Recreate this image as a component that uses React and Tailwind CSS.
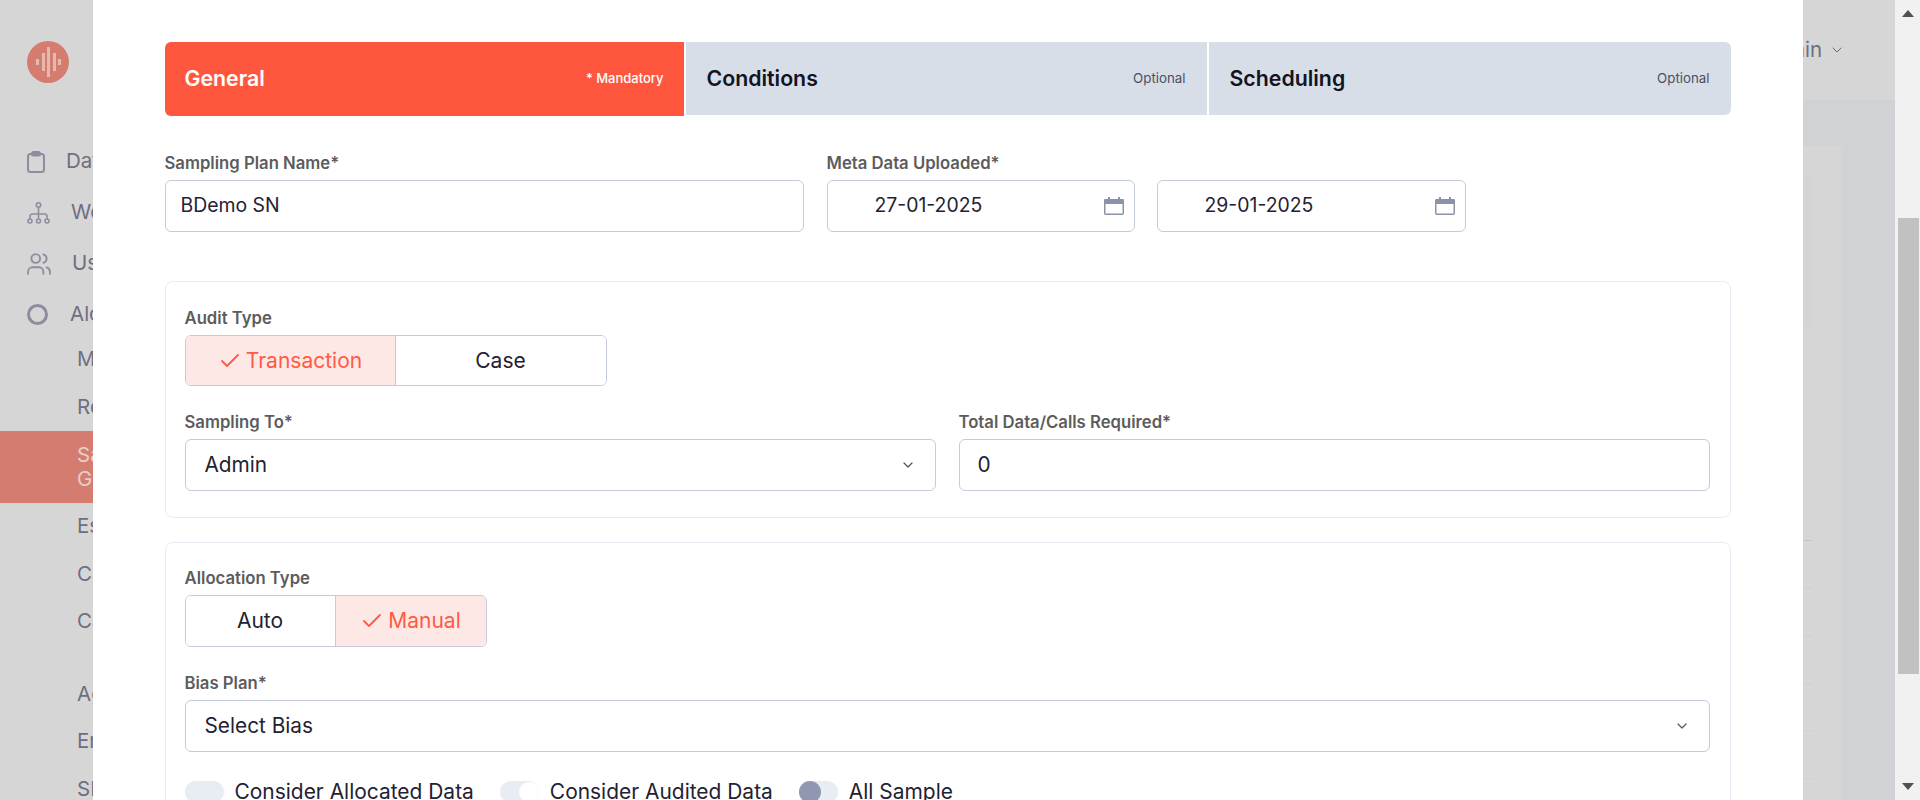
import { Check, ChevronDown } from "lucide-react";

const subItemsTop = ["Manual", "Review"];
const subItemsMiddle = ["Escalation", "Calibration", "Campaign"];
const subItemsBottom = ["Agents", "Errors", "SLA"];

function Logo() {
  return (
    <svg width="42" height="42" viewBox="0 0 42 42">
      <circle cx="21" cy="21" r="21" fill="#d57c71" />
      <g fill="#e5b8b0">
        <rect x="9" y="18" width="3" height="6" />
        <rect x="15" y="12" width="3" height="18" />
        <rect x="20" y="6" width="3" height="30" />
        <rect x="26" y="12" width="3" height="18" />
        <rect x="31" y="18" width="3" height="6" />
      </g>
    </svg>
  );
}

function ClipboardIcon() {
  return (
    <svg width="18" height="22" viewBox="0 0 18 22" fill="none" stroke="#8e8d9f" strokeWidth="2">
      <rect x="1" y="3" width="16" height="18" rx="2.5" />
      <rect x="5" y="1" width="8" height="3.5" rx="1.5" />
    </svg>
  );
}

function HierarchyIcon() {
  return (
    <svg width="23" height="22" viewBox="0 0 23 22" fill="none" stroke="#8e8d9f" strokeWidth="1.6">
      <circle cx="11.5" cy="3" r="2.2" />
      <path d="M11.5 5.2V17M3 17v-2.5a2.5 2.5 0 0 1 2.5-2.5h12a2.5 2.5 0 0 1 2.5 2.5V17" />
      <circle cx="3" cy="19" r="2" />
      <circle cx="11.5" cy="19" r="2" />
      <circle cx="20" cy="19" r="2" />
    </svg>
  );
}

function UsersIcon() {
  return (
    <svg width="24" height="22" viewBox="1 2 22 20" fill="none" stroke="#8e8d9f" strokeWidth="1.7" strokeLinecap="round">
      <path d="M16 21v-2a4 4 0 0 0-4-4H6a4 4 0 0 0-4 4v2" />
      <circle cx="9" cy="7" r="4" />
      <path d="M22 21v-2a4 4 0 0 0-3-3.87" />
      <path d="M16 3.13a4 4 0 0 1 0 7.75" />
    </svg>
  );
}

function CalendarIcon() {
  return (
    <svg width="20" height="18" viewBox="0 0 20 18" fill="none">
      <rect x="0.75" y="2.75" width="18.5" height="14.5" rx="1" stroke="#8b93a8" strokeWidth="1.5" />
      <rect x="0.5" y="2" width="19" height="5" fill="#8b93a8" />
      <rect x="4" y="0" width="2" height="3" fill="#8b93a8" />
      <rect x="14" y="0" width="2" height="3" fill="#8b93a8" />
    </svg>
  );
}

function Sidebar() {
  return (
    <div className="w-[270px] shrink-0 bg-[#d6d6d6] text-[20.5px] text-[#6e6e80]">
      <div className="h-[136px] pl-[27px] pt-[41px]">
        <Logo />
      </div>
      <div className="flex h-[51px] items-center gap-[21px] pl-[27px]">
        <ClipboardIcon />
        <span>Data</span>
      </div>
      <div className="flex h-[51px] items-center gap-[21px] pl-[27px]">
        <HierarchyIcon />
        <span>Workflow</span>
      </div>
      <div className="flex h-[51px] items-center gap-[21px] pl-[27px]">
        <UsersIcon />
        <span>Users</span>
      </div>
      <div className="flex h-[47px] items-center gap-[22px] pl-[27px] pt-[4px]">
        <div className="h-[21px] w-[21px] rounded-full border-[3px] border-[#8e8d9f]" />
        <span>Alocation</span>
      </div>
      {subItemsTop.map((item) => (
        <div key={item} className="flex h-[47.5px] items-center pl-[77px]">
          {item}
        </div>
      ))}
      <div className="flex h-[72px] items-center bg-[#d57c71] pl-[77px] leading-6 text-[#e9cdc8]">
        Sampling
        <br />
        Generation
      </div>
      {subItemsMiddle.map((item) => (
        <div key={item} className="flex h-[47.5px] items-center pl-[77px]">
          {item}
        </div>
      ))}
      <div className="h-[25px]" />
      {subItemsBottom.map((item) => (
        <div key={item} className="flex h-[47.5px] items-center pl-[77px]">
          {item}
        </div>
      ))}
    </div>
  );
}

function Background() {
  return (
    <div className="flex min-w-0 flex-1 flex-col bg-[#d1d2d6]">
      <div className="flex h-[100px] shrink-0 items-center justify-end gap-[7px] bg-[#d6d6d6] pr-[50px] text-[20.5px] text-[#6e6e80]">
        <span>Admin</span>
        <ChevronDown size={16} strokeWidth={1.5} className="text-[#6b6b6b]" />
      </div>
      <div className="mr-[53px] mt-[46px] flex-1 rounded-t-md bg-[#d6d6d6] pr-[30px] pt-[30px]">
        <div className="h-[151px] rounded-md bg-[#d3d4d8]" />
        <div className="mt-[166px]">
          <div className="h-[48px] border-b border-[#c4c4c4]" />
          {[1, 2, 3, 4, 5].map((row) => (
            <div key={row} className="h-[47.5px] border-b border-[#cfcfcf]" />
          ))}
        </div>
      </div>
    </div>
  );
}

function Label({ children }) {
  return <div className="mb-[7px] h-5 text-[16.7px] leading-5 font-semibold text-[#5c5c5c]">{children}</div>;
}

function Field({ children, className }) {
  return (
    <div className={`flex h-[52px] items-center rounded-md border border-[#c3cbdc] bg-white text-[#1f2233] ${className}`}>
      {children}
    </div>
  );
}

function Segment({ active, children, className }) {
  return (
    <div
      className={`flex items-center justify-center gap-[4px] text-[21px] ${
        active ? "bg-[#fee8e6] text-[#ff5a45]" : "bg-white text-[#1f2233]"
      } ${className}`}
    >
      {active && <Check size={24} strokeWidth={1.8} />}
      {children}
    </div>
  );
}

function Toggle({ knob }) {
  return (
    <div className="flex h-[22px] w-[39px] shrink-0 items-center rounded-full bg-[#e8ecf3]">
      {knob === "white" && <div className="ml-auto h-[20px] w-[20px] rounded-full bg-white" />}
      {knob === "dark" && <div className="h-[22px] w-[22px] rounded-full bg-[#8f98b0]" />}
    </div>
  );
}

function Tab({ title, note, active }) {
  return (
    <div
      className={`flex items-center justify-between ${
        active
          ? "h-[74px] rounded-l-md bg-[#ff563e] pl-[20px] pr-[20px] text-white"
          : "h-[73px] bg-[#d8dee8] pl-[21px] pr-[21px] text-[#12141f] last:rounded-r-md"
      }`}
    >
      <span className="text-[21.3px] font-semibold">{title}</span>
      <span className={active ? "text-[13px] font-medium" : "text-[13.3px] text-[#4b5060]"}>{note}</span>
    </div>
  );
}

function Modal() {
  return (
    <div className="absolute inset-y-0 left-0 right-[25px] flex justify-center">
      <div className="h-full w-[1710px] shrink-0 overflow-hidden bg-white pl-[72px] pt-[42px]">
        <div className="w-[1566px]">
          <div className="grid grid-cols-[519px_521px_1fr] items-start gap-[2px]">
            <Tab title="General" note="* Mandatory" active />
            <Tab title="Conditions" note="Optional" />
            <Tab title="Scheduling" note="Optional" />
          </div>

          <div className="mt-[37px] flex gap-[23px] text-[19.4px]">
            <div className="w-[639px]">
              <Label>Sampling Plan Name*</Label>
              <Field className="pl-[15px]">BDemo SN</Field>
            </div>
            <div>
              <Label>Meta Data Uploaded*</Label>
              <div className="flex gap-[22px]">
                <Field className="w-[308px] justify-between pl-[47px] pr-[10px]">
                  27-01-2025
                  <CalendarIcon />
                </Field>
                <Field className="w-[309px] justify-between pl-[47px] pr-[10px]">
                  29-01-2025
                  <CalendarIcon />
                </Field>
              </div>
            </div>
          </div>

          <div className="mt-[49px] rounded-lg border border-[#e8ebf3] pb-[26px] pl-[19px] pr-[20px] pt-[26px] text-[20.8px]">
            <Label>Audit Type</Label>
            <div className="flex h-[51px] w-[422px] overflow-hidden rounded-md border border-[#c3cbdc]">
              <Segment active className="w-[210px] border-r border-[#c3cbdc]">
                Transaction
              </Segment>
              <Segment className="flex-1">Case</Segment>
            </div>
            <div className="mt-[26px] grid grid-cols-2 gap-[23px]">
              <div>
                <Label>Sampling To*</Label>
                <Field className="justify-between pl-[19px] pr-[19px]">
                  Admin
                  <ChevronDown size={16} strokeWidth={1.8} className="text-[#555]" />
                </Field>
              </div>
              <div>
                <Label>Total Data/Calls Required*</Label>
                <Field className="pl-[18px]">0</Field>
              </div>
            </div>
          </div>

          <div className="mt-[24px] rounded-lg border border-[#e8ebf3] pb-[26px] pl-[19px] pr-[20px] pt-[25px] text-[20.8px]">
            <Label>Allocation Type</Label>
            <div className="flex h-[52px] w-[302px] overflow-hidden rounded-md border border-[#c3cbdc]">
              <Segment className="w-[150px] border-r border-[#c3cbdc]">Auto</Segment>
              <Segment active className="flex-1">
                Manual
              </Segment>
            </div>
            <div className="mt-[26px]">
              <Label>Bias Plan*</Label>
              <Field className="justify-between pl-[19px] pr-[19px]">
                Select Bias
                <ChevronDown size={16} strokeWidth={1.8} className="text-[#555]" />
              </Field>
            </div>
            <div className="mt-[29px] flex h-[22px] items-center gap-[26px] text-[20.95px] text-[#1f2233]">
              <div className="flex items-center gap-[11px]">
                <Toggle />
                <span>Consider Allocated Data</span>
              </div>
              <div className="flex items-center gap-[11px]">
                <Toggle knob="white" />
                <span>Consider Audited Data</span>
              </div>
              <div className="flex items-center gap-[11px]">
                <Toggle knob="dark" />
                <span>All Sample</span>
              </div>
            </div>
          </div>
        </div>
      </div>
    </div>
  );
}

function Scrollbar() {
  return (
    <div className="flex w-[25px] shrink-0 flex-col items-center bg-[#f1f1f1]">
      <svg width="12" height="7" viewBox="0 0 12 7" className="mt-[10px]">
        <path d="M6 0l6 7H0z" fill="#505050" />
      </svg>
      <div className="ml-px mt-[201px] h-[456px] w-[21px] bg-[#c1c1c1]" />
      <svg width="12" height="7" viewBox="0 0 12 7" className="mb-[10px] mt-auto">
        <path d="M6 7L0 0h12z" fill="#505050" />
      </svg>
    </div>
  );
}

export default function App() {
  return (
    <div className="relative flex h-screen overflow-hidden font-['Inter',sans-serif]">
      <Sidebar />
      <Background />
      <Scrollbar />
      <Modal />
    </div>
  );
}
